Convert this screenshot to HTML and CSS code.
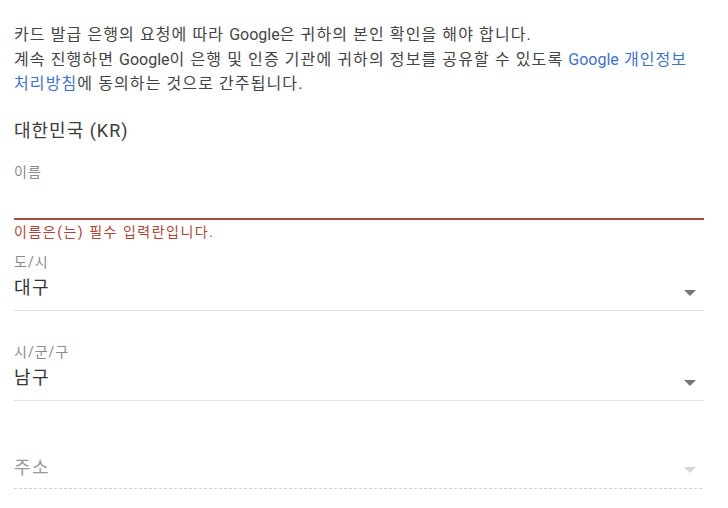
FILE: index.html
```html
<!DOCTYPE html>
<html lang="ko">
<head>
<meta charset="utf-8">
<link rel="stylesheet" href="styles.css">
</head>
<body>
<div class="form">
  <p class="notice">카드 발급 은행의 요청에 따라 <span class="en">Google</span>은 귀하의 본인 확인을 해야 합니다.<br>계속 진행하면 <span class="en">Google</span>이 은행 및 인증 기관에 귀하의 정보를 공유할 수 있도록 <a class="link" href="#"><span class="en">Google</span> 개인정보 처리방침</a>에 동의하는 것으로 간주됩니다.</p>
  <div class="country">대한민국 (KR)</div>

  <div class="field text-field error">
    <div class="label">이름</div>
    <div class="input"></div>
  </div>
  <div class="error-msg">이름은(는) 필수 입력란입니다.</div>

  <div class="field select-field">
    <div class="label">도/시</div>
    <div class="value-row"><span class="value">대구</span><span class="arrow"></span></div>
  </div>

  <div class="field select-field">
    <div class="label">시/군/구</div>
    <div class="value-row"><span class="value">남구</span><span class="arrow"></span></div>
  </div>

  <div class="field select-field disabled">
    <div class="label"></div>
    <div class="value-row"><span class="value placeholder">주소</span><span class="arrow"></span></div>
  </div>
</div>
</body>
</html>
```

FILE: styles.css
```css
html, body {
  margin: 0;
  padding: 0;
  background: #fff;
}
body {
  font-family: Roboto, "Noto Sans CJK KR", sans-serif;
  color: #3c3c3c;
}
.form {
  width: 690px;
  padding: 0 0 0 14px;
}
.notice {
  margin: 23px 0 0;
  font-size: 16px;
  line-height: 24.5px;
  letter-spacing: 1.1px;
  color: #444;
}
.notice .en {
  letter-spacing: 0;
}
.link {
  color: #3f72c8;
  text-decoration: none;
}
.country {
  margin-top: 22px;
  font-size: 18px;
  line-height: 24px;
  letter-spacing: 1px;
  color: #3c3c3c;
}
.label {
  font-size: 14px;
  line-height: 16px;
  height: 16px;
  letter-spacing: 1px;
  color: #8a8a8a;
}
.text-field {
  margin-top: 21px;
}
.text-field .input {
  height: 38px;
}
.text-field.error {
  border-bottom: 2px solid #a84a3e;
}
.error-msg {
  margin-top: 4px;
  font-size: 14px;
  line-height: 16px;
  letter-spacing: 1.5px;
  color: #ad4538;
}
.select-field {
  padding-bottom: 10px;
  border-bottom: 1px solid #e0e0e0;
}
.error-msg + .select-field {
  margin-top: 14px;
}
.select-field + .select-field {
  margin-top: 33px;
}
.value-row {
  margin-top: 6px;
  display: flex;
  align-items: center;
  justify-content: space-between;
  height: 24px;
}
.value {
  font-size: 18px;
  line-height: 24px;
  letter-spacing: 1.5px;
  color: #333;
}
.value.placeholder {
  color: #9a9a9a;
}
.arrow {
  width: 0;
  height: 0;
  margin: 10px 8px 0 0;
  border-left: 6px solid transparent;
  border-right: 6px solid transparent;
  border-top: 6px solid #767676;
}
.disabled .arrow {
  border-top-color: #d6d6d6;
  margin-top: 4px;
}
.select-field.disabled {
  border-bottom: none;
  background: repeating-linear-gradient(to right, #cfcfcf 0 3px, transparent 3px 5px) left bottom / 100% 1px no-repeat;
  padding-bottom: 9px;
}
```
